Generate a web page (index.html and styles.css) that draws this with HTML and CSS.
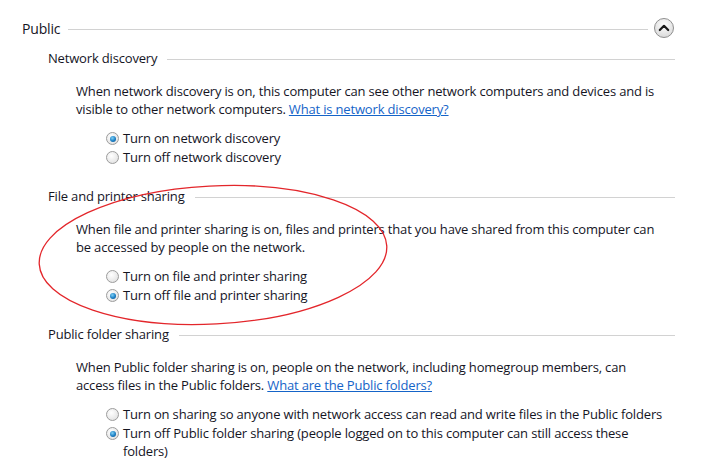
FILE: index.html
```html
<!DOCTYPE html>
<html>
<head>
<meta charset="utf-8">
<link rel="stylesheet" href="styles.css">
</head>
<body>
<div class="page">
  <div class="group-head">
    <span class="group-title">Public</span>
    <span class="rule"></span>
    <span class="collapse">
      <svg width="22" height="22" viewBox="0 0 22 22">
        <defs>
          <radialGradient id="g" cx="50%" cy="35%" r="60%">
            <stop offset="0" stop-color="#ffffff"/>
            <stop offset="1" stop-color="#dcdcdc"/>
          </radialGradient>
        </defs>
        <circle cx="11" cy="11" r="9.5" fill="url(#g)" stroke="#8f8f8f" stroke-width="1"/>
        <path d="M6.8 13 L11 8.8 L15.2 13" fill="none" stroke="#1a1a1a" stroke-width="2.2" stroke-linecap="round" stroke-linejoin="round"/>
      </svg>
    </span>
  </div>

  <section class="section">
    <div class="sec-head"><span class="sec-title">Network discovery</span><span class="rule"></span></div>
    <p class="desc">When network discovery is on, this computer can see other network computers and devices and is visible to other network computers. <a href="#">What is network discovery?</a></p>
    <div class="options">
      <label class="opt"><span class="radio on"></span><span>Turn on network discovery</span></label>
      <label class="opt"><span class="radio"></span><span>Turn off network discovery</span></label>
    </div>
  </section>

  <section class="section">
    <div class="sec-head"><span class="sec-title">File and printer sharing</span><span class="rule"></span></div>
    <p class="desc">When file and printer sharing is on, files and printers that you have shared from this computer can be accessed by people on the network.</p>
    <div class="options">
      <label class="opt"><span class="radio"></span><span>Turn on file and printer sharing</span></label>
      <label class="opt"><span class="radio on"></span><span>Turn off file and printer sharing</span></label>
    </div>
  </section>

  <section class="section">
    <div class="sec-head"><span class="sec-title">Public folder sharing</span><span class="rule"></span></div>
    <p class="desc">When Public folder sharing is on, people on the network, including homegroup members, can access files in the Public folders. <a href="#">What are the Public folders?</a></p>
    <div class="options">
      <label class="opt"><span class="radio"></span><span>Turn on sharing so anyone with network access can read and write files in the Public folders</span></label>
      <label class="opt"><span class="radio on"></span><span>Turn off Public folder sharing (people logged on to this computer can still access these folders)</span></label>
    </div>
  </section>

  <svg class="mark" width="360" height="150" viewBox="0 0 360 150">
    <ellipse cx="176" cy="71" rx="174" ry="69" fill="none" stroke="#e3262b" stroke-width="1.3" transform="rotate(-3 176 71)"/>
  </svg>
</div>
</body>
</html>
```

FILE: styles.css
```css
html, body {
  margin: 0;
  padding: 0;
  background: #ffffff;
}
body {
  font-family: "Open Sans", "Noto Sans", sans-serif;
  font-size: 13px;
  letter-spacing: -0.17px;
  color: #15151f;
}
.page {
  position: relative;
  width: 715px;
  height: 468px;
  overflow: hidden;
  padding: 17px 0 0 22px;
  box-sizing: border-box;
}
.group-head {
  display: flex;
  align-items: center;
  width: 653px;
  height: 22px;
}
.group-title {
  font-size: 14px;
  padding-right: 8px;
}
.rule {
  flex: 1;
  height: 1px;
  background: #d2d2d2;
  margin-top: 3px;
}
.collapse {
  display: flex;
  margin-left: 5px;
}
.section {
  margin-left: 26px;
  width: 627px;
}
.sec-head {
  display: flex;
  align-items: center;
  height: 22px;
  margin-top: 8px;
}
.section + .section .sec-head {
  margin-top: 18px;
}
.sec-title {
  padding-right: 10px;
}
.desc {
  margin: 13px 0 0 28px;
  line-height: 18px;
  padding-right: 13px;
}
.desc a {
  color: #1564c8;
  text-decoration: underline;
}
.options {
  margin: 11px 0 0 58px;
  display: flex;
  flex-direction: column;
}
.opt {
  display: flex;
  align-items: flex-start;
  line-height: 18px;
  margin-bottom: 1px;
}
.radio {
  flex: none;
  width: 11px;
  height: 11px;
  border-radius: 50%;
  border: 1px solid #9c9c9c;
  background: radial-gradient(circle at 40% 35%, #ffffff 0%, #e6e6e6 70%, #d2d2d2 100%);
  margin: 3px 4px 0 0;
  position: relative;
  box-sizing: content-box;
}
.radio.on::after {
  content: "";
  position: absolute;
  left: 2.5px;
  top: 2.5px;
  width: 6px;
  height: 6px;
  border-radius: 50%;
  background: radial-gradient(circle at 40% 35%, #7fd0f5 0%, #1a7ec4 55%, #0b4e86 100%);
}
.mark {
  position: absolute;
  left: 37px;
  top: 184px;
}
```
